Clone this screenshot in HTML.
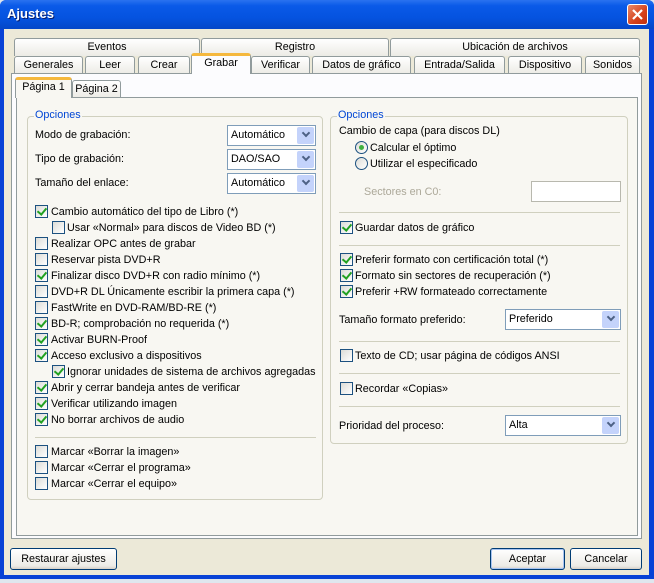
<!DOCTYPE html>
<html><head><meta charset="utf-8"><style>
*{box-sizing:border-box;margin:0;padding:0}
body{width:654px;height:583px;overflow:hidden;background:#dfe6ee;font-family:Tahoma,"Liberation Sans","DejaVu Sans",sans-serif;font-size:10.8px;color:#000;position:relative}
.a{position:absolute;white-space:nowrap}
#win{position:absolute;left:0;top:0;width:654px;height:579px;background:#0842d6;border-radius:6px 6px 0 0}
#title{position:absolute;left:0;top:0;width:654px;height:29px;border-radius:6px 6px 0 0;background:linear-gradient(#2a72f0,#0a5ae8 20%,#0553e0 60%,#0447c8)}
#title span{position:absolute;left:7px;top:6px;color:#fff;font-weight:bold;font-size:13px;text-shadow:1px 1px #0a1f6e}
#close{position:absolute;left:627px;top:4px;width:21px;height:21px;border:1px solid #fff;border-radius:3px;background:linear-gradient(135deg,#e8896a,#d5411c 60%,#c0300f)}
#body{position:absolute;left:4px;top:29px;width:645px;height:546px;background:#ece9d8}
.tab{position:absolute;height:18px;border:1px solid #919b9c;border-bottom:none;border-radius:3px 3px 0 0;background:linear-gradient(#fff,#ecebe5);text-align:center;line-height:16px}
.sel{background:#fcfcfe;border-top:3px solid #f5b83d;line-height:16px;z-index:3}
.pane{position:absolute;border:1px solid #919b9c;background:#f8f7f2}
.grp{position:absolute;border:1px solid #d0d0bf;border-radius:4px}
.gl{position:absolute;color:#0046d5;background:#f8f7f2;padding:0 1px;top:-8px;left:6px}
.cb{position:absolute;width:13px;height:13px;border:1px solid #1c5180;background:linear-gradient(135deg,#dcdcd7,#fff);margin-top:-2px}
.cb.c::after{content:"";position:absolute;left:3px;top:0px;width:4px;height:7px;border:solid #21a121;border-width:0 2px 2px 0;transform:rotate(40deg)}
.rb{position:absolute;width:13px;height:13px;border:1px solid #1c5180;border-radius:50%;background:linear-gradient(135deg,#dcdcd7,#fff);margin-top:-2px}
.rb.c::after{content:"";position:absolute;left:3px;top:3px;width:5px;height:5px;border-radius:50%;background:#3fb03f}
.cmb{position:absolute;height:21px;border:1px solid #7f9db9;background:#fff;padding-left:3px;line-height:19px}
.cmb::after{content:"";position:absolute;right:1px;top:1px;width:17px;height:17px;border-radius:2px;background:#c4d3fb}
.cmb i{position:absolute;right:6px;top:4px;width:6px;height:6px;border:solid #4d6185;border-width:0 2px 2px 0;transform:rotate(45deg);z-index:2}
.sep{position:absolute;height:1px;background:#d0d0bf}
.btn{position:absolute;height:22px;border:1px solid #003c74;border-radius:3px;background:linear-gradient(#fff,#ecebe6 85%,#d6d0c5);text-align:center;line-height:20px}
</style></head><body>
<div id="win"></div>
<div id="title"><span>Ajustes</span><div id="close"><svg width="19" height="19" viewBox="0 0 19 19"><path d="M5 5L14 14M14 5L5 14" stroke="#fff" stroke-width="2.2"/></svg></div></div>
<div id="body"></div>

<div class="tab" style="left:14px;top:38px;width:186px">Eventos</div>
<div class="tab" style="left:201px;top:38px;width:188px">Registro</div>
<div class="tab" style="left:390px;top:38px;width:250px">Ubicación de archivos</div>
<div class="tab" style="left:14px;top:56px;width:69px">Generales</div>
<div class="tab" style="left:85px;top:56px;width:50px">Leer</div>
<div class="tab" style="left:138px;top:56px;width:52px">Crear</div>
<div class="tab" style="left:251px;top:56px;width:59px">Verificar</div>
<div class="tab" style="left:312px;top:56px;width:99px">Datos de gráfico</div>
<div class="tab" style="left:414px;top:56px;width:91px">Entrada/Salida</div>
<div class="tab" style="left:508px;top:56px;width:74px">Dispositivo</div>
<div class="tab" style="left:585px;top:56px;width:55px">Sonidos</div>
<div class="pane" style="left:11px;top:73px;width:631px;height:466px;background:#fcfcfe"></div>
<div class="tab sel" style="left:191px;top:53px;width:60px;height:21px;line-height:14px">Grabar</div>

<div class="tab" style="left:72px;top:80px;width:49px;height:18px">Página 2</div>
<div class="pane" style="left:16px;top:97px;width:622px;height:439px"></div>
<div class="tab sel" style="left:15px;top:77px;width:57px;height:21px;background:#f8f7f2;line-height:15px">Página 1</div>

<div class="grp" style="left:27px;top:116px;width:296px;height:384px"><span class="gl">Opciones</span></div>
<div class="grp" style="left:330px;top:116px;width:298px;height:328px"><span class="gl">Opciones</span></div>

<div class="a" style="left:35px;top:129px">Modo de grabación:</div>
<div class="cmb" style="left:227px;top:125px;width:89px">Automático<i></i></div>
<div class="a" style="left:35px;top:153px">Tipo de grabación:</div>
<div class="cmb" style="left:227px;top:149px;width:89px">DAO/SAO<i></i></div>
<div class="a" style="left:35px;top:177px">Tamaño del enlace:</div>
<div class="cmb" style="left:227px;top:173px;width:89px">Automático<i></i></div>

<div class="cb c" style="left:35px;top:207px"></div><div class="a" style="left:51px;top:206px">Cambio automático del tipo de Libro (*)</div>
<div class="cb" style="left:52px;top:223px"></div><div class="a" style="left:67px;top:222px">Usar «Normal» para discos de Video BD (*)</div>
<div class="cb" style="left:35px;top:239px"></div><div class="a" style="left:51px;top:238px">Realizar OPC antes de grabar</div>
<div class="cb" style="left:35px;top:255px"></div><div class="a" style="left:51px;top:254px">Reservar pista DVD+R</div>
<div class="cb c" style="left:35px;top:271px"></div><div class="a" style="left:51px;top:270px">Finalizar disco DVD+R con radio mínimo (*)</div>
<div class="cb" style="left:35px;top:287px"></div><div class="a" style="left:51px;top:286px">DVD+R DL Únicamente escribir la primera capa (*)</div>
<div class="cb" style="left:35px;top:303px"></div><div class="a" style="left:51px;top:302px">FastWrite en DVD-RAM/BD-RE (*)</div>
<div class="cb c" style="left:35px;top:319px"></div><div class="a" style="left:51px;top:318px">BD-R; comprobación no requerida (*)</div>
<div class="cb c" style="left:35px;top:335px"></div><div class="a" style="left:51px;top:334px">Activar BURN-Proof</div>
<div class="cb c" style="left:35px;top:351px"></div><div class="a" style="left:51px;top:350px">Acceso exclusivo a dispositivos</div>
<div class="cb c" style="left:52px;top:367px"></div><div class="a" style="left:67px;top:366px">Ignorar unidades de sistema de archivos agregadas</div>
<div class="cb c" style="left:35px;top:383px"></div><div class="a" style="left:51px;top:382px">Abrir y cerrar bandeja antes de verificar</div>
<div class="cb c" style="left:35px;top:399px"></div><div class="a" style="left:51px;top:398px">Verificar utilizando imagen</div>
<div class="cb c" style="left:35px;top:415px"></div><div class="a" style="left:51px;top:414px">No borrar archivos de audio</div>
<div class="sep" style="left:35px;top:437px;width:281px"></div>
<div class="cb" style="left:35px;top:447px"></div><div class="a" style="left:51px;top:446px">Marcar «Borrar la imagen»</div>
<div class="cb" style="left:35px;top:463px"></div><div class="a" style="left:51px;top:462px">Marcar «Cerrar el programa»</div>
<div class="cb" style="left:35px;top:479px"></div><div class="a" style="left:51px;top:478px">Marcar «Cerrar el equipo»</div>

<div class="a" style="left:339px;top:125px">Cambio de capa (para discos DL)</div>
<div class="rb c" style="left:355px;top:143px"></div><div class="a" style="left:370px;top:142px">Calcular el óptimo</div>
<div class="rb" style="left:355px;top:159px"></div><div class="a" style="left:370px;top:158px">Utilizar el especificado</div>
<div class="a" style="left:364px;top:186px;color:#aca899">Sectores en C0:</div>
<div class="a" style="left:531px;top:181px;width:90px;height:21px;border:1px solid #b8b8ae;background:#fff"></div>
<div class="sep" style="left:339px;top:212px;width:281px"></div>
<div class="cb c" style="left:340px;top:223px"></div><div class="a" style="left:355px;top:222px">Guardar datos de gráfico</div>
<div class="sep" style="left:339px;top:245px;width:281px"></div>
<div class="cb c" style="left:340px;top:255px"></div><div class="a" style="left:355px;top:254px">Preferir formato con certificación total (*)</div>
<div class="cb c" style="left:340px;top:271px"></div><div class="a" style="left:355px;top:270px">Formato sin sectores de recuperación (*)</div>
<div class="cb c" style="left:340px;top:287px"></div><div class="a" style="left:355px;top:286px">Preferir +RW formateado correctamente</div>
<div class="a" style="left:339px;top:314px">Tamaño formato preferido:</div>
<div class="cmb" style="left:505px;top:309px;width:116px">Preferido<i></i></div>
<div class="sep" style="left:339px;top:341px;width:281px"></div>
<div class="cb" style="left:340px;top:351px"></div><div class="a" style="left:355px;top:350px">Texto de CD; usar página de códigos ANSI</div>
<div class="sep" style="left:339px;top:373px;width:281px"></div>
<div class="cb" style="left:340px;top:384px"></div><div class="a" style="left:355px;top:383px">Recordar «Copias»</div>
<div class="sep" style="left:339px;top:406px;width:281px"></div>
<div class="a" style="left:339px;top:420px">Prioridad del proceso:</div>
<div class="cmb" style="left:505px;top:415px;width:116px">Alta<i></i></div>

<div class="btn" style="left:10px;top:548px;width:107px">Restaurar ajustes</div>
<div class="btn" style="left:490px;top:548px;width:75px;box-shadow:inset 0 0 0 1px #a8c4f0">Aceptar</div>
<div class="btn" style="left:570px;top:548px;width:72px">Cancelar</div>
</body></html>
